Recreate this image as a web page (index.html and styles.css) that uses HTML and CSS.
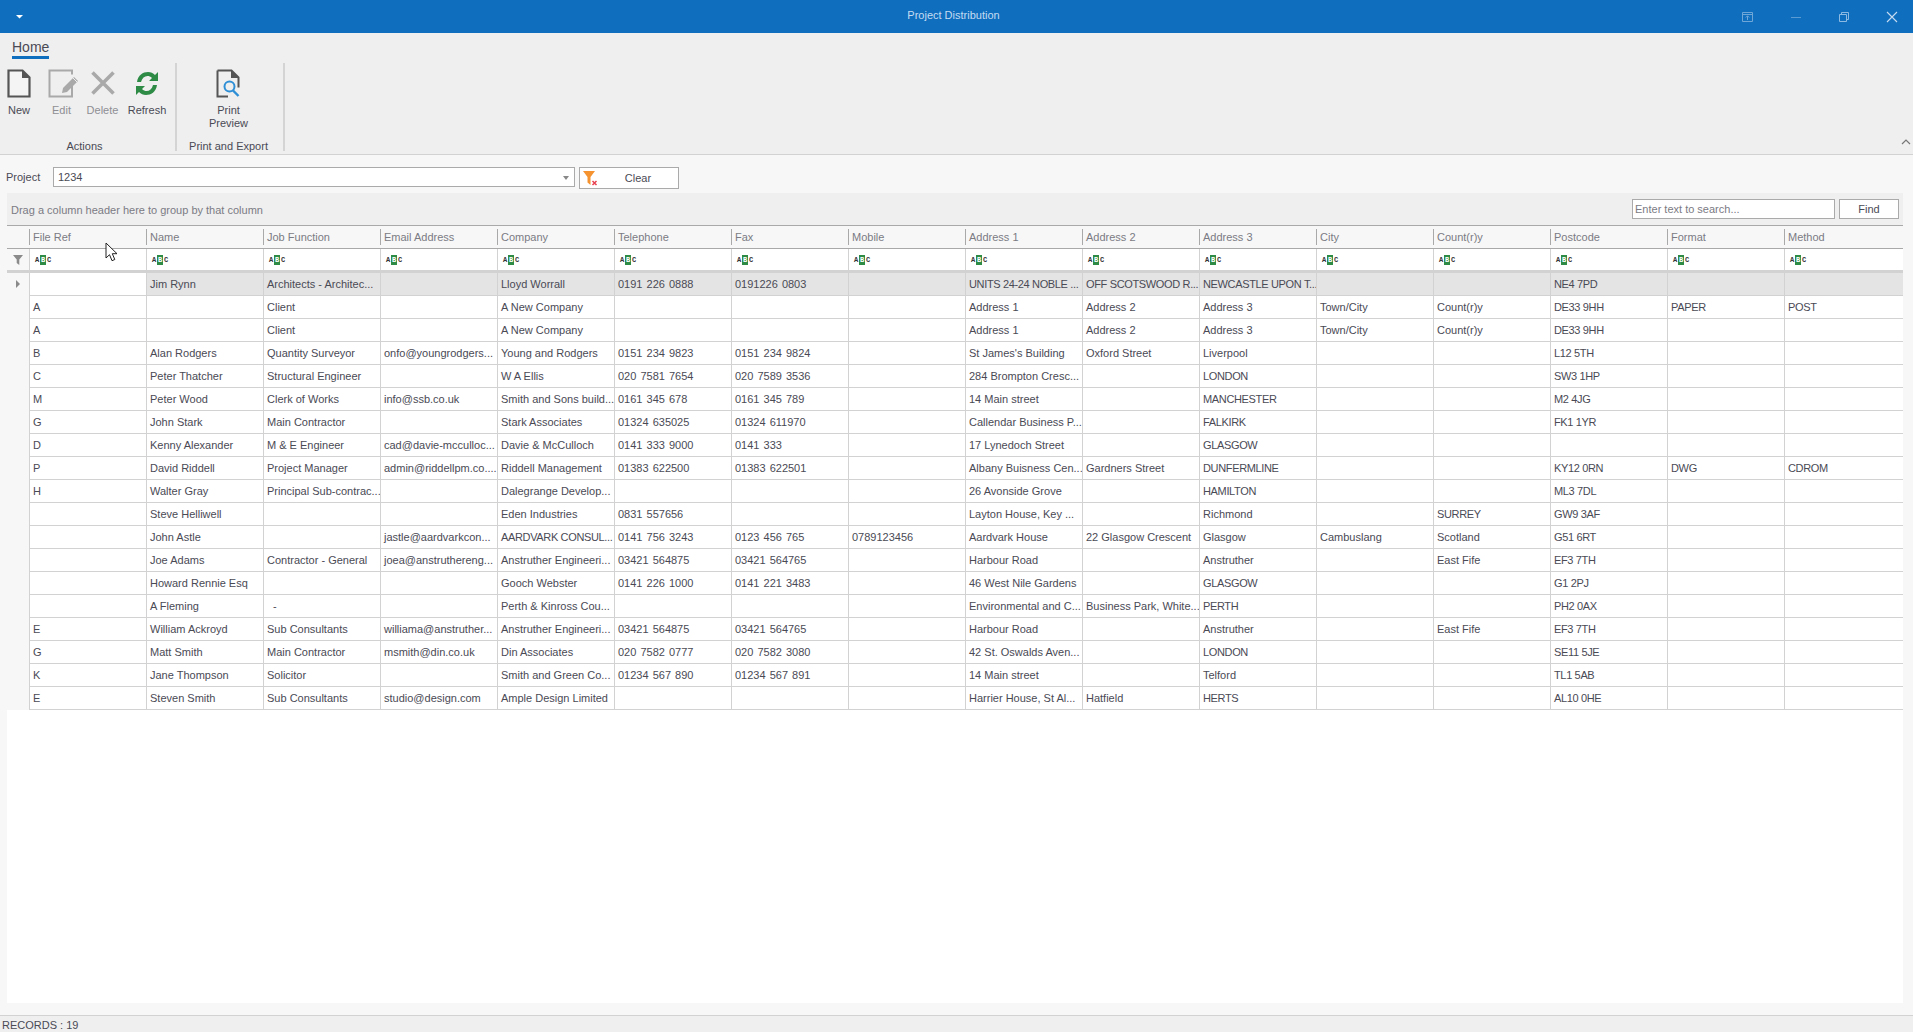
FILE: index.html
```html
<!DOCTYPE html>
<html lang="en">
<head>
<meta charset="utf-8">
<title>Project Distribution</title>
<link rel="stylesheet" href="styles.css">
</head>
<body>
<div class="app">
  <header class="titlebar">
    <svg class="qat" width="7" height="4" viewBox="0 0 7 4"><path d="M0 0h7L3.5 3.5z" fill="#fff"/></svg>
    <div class="title">Project Distribution</div>
    <div class="winbtns">
      <svg width="12" height="12" viewBox="0 0 12 12" fill="none" stroke="#6ea6d8"><path d="M.5 1.5h10v9H.5zM.5 3.5h10M5.5 9V5M3.8 6.5l1.7-1.7 1.7 1.7"/></svg>
      <svg width="12" height="12" viewBox="0 0 12 12" fill="none" stroke="#5b9bd3"><path d="M1 6.5h10"/></svg>
      <svg width="12" height="12" viewBox="0 0 12 12" fill="none" stroke="#8dbae2"><path d="M1.5 3.5h7v7h-7zM3.5 3.5v-2h7v7h-2"/></svg>
      <svg width="12" height="12" viewBox="0 0 12 12" fill="none" stroke="#c6dcf0" stroke-width="1.1"><path d="M1 1l10 10M11 1L1 11"/></svg>
    </div>
  </header>

  <section class="ribbon">
    <div class="tabs"><span class="tab">Home</span></div>
    <div class="groups">
      <div class="group g1">
        <div class="btns">
          <div class="rb w1">
            <svg width="24" height="29" viewBox="0 0 24 29" fill="none"><path d="M1.500 1.500h14l7 7v19h-21z" stroke="#555" stroke-width="2.200" fill="#f4f4f4"/><path d="M15 1v8h8z" fill="#555"/></svg>
            <span>New</span>
          </div>
          <div class="rb w2 off">
            <svg class="editicon" width="31" height="29" viewBox="0 0 31 29" fill="none"><path d="M24 13v14.500H1.500v-26H24v4" stroke="#a9a9a9" stroke-width="2"/><path d="M15 19l11-11 4 4-11 11-5 1z" fill="#a9a9a9"/><path d="M25 9l4 4" stroke="#f0f0f0"/></svg>
            <span>Edit</span>
          </div>
          <div class="rb w3 off">
            <svg width="26" height="29" viewBox="0 0 26 29" fill="none"><path d="M2.500 3.500l21 21M23.500 3.500l-21 21" stroke="#a9a9a9" stroke-width="3.600"/></svg>
            <span>Delete</span>
          </div>
          <div class="rb w4">
            <svg width="26" height="29" viewBox="0 0 26 29"><path d="M3 13C4 6 9 3 14 3c3 0 5 1 7 3l3-3v9h-9l3-3c-1.500-1.500-3-2-4.500-2-3 0-5.500 2-6.500 6z" fill="#2e8b46"/><path d="M23 16c-1 7-6 10-11 10-3 0-5-1-7-3l-3 3v-9h9l-3 3c1.500 1.500 3 2 4.500 2 3 0 5.500-2 6.500-6z" fill="#2e8b46"/></svg>
            <span>Refresh</span>
          </div>
        </div>
        <div class="glabel g1label">Actions</div>
      </div>
      <div class="group g2">
        <div class="btns">
          <div class="rb w5">
            <svg width="25" height="29" viewBox="0 0 25 29" fill="none"><path d="M1.500 1.500h14l7 7v10M12 27.500H1.500v-26" stroke="#555" stroke-width="2"/><path d="M15 1v8h8z" fill="#555"/><circle cx="13.500" cy="17.500" r="5" stroke="#2f8fd6" stroke-width="2"/><path d="M17 21.500l5.500 5.500" stroke="#2f8fd6" stroke-width="2.400"/></svg>
            <span>Print<br>Preview</span>
          </div>
        </div>
        <div class="glabel">Print and Export</div>
      </div>
    </div>
    <svg class="collapse" width="10" height="6" viewBox="0 0 10 6" fill="none"><path d="M1 5l4-4 4 4" stroke="#777" stroke-width="1.200"/></svg>
  </section>

  <main class="content">
    <div class="filterbar">
      <label class="plabel">Project</label>
      <div class="combo"><span>1234</span><i class="caret"></i></div>
      <button class="clear">
        <svg width="15" height="15" viewBox="0 0 15 15"><path d="M0 0h12L7.500 6v8l-3-2.500V6z" fill="#f59331"/><path d="M9.500 10l4 4M13.500 10l-4 4" stroke="#e8404f" stroke-width="1.500"/></svg>
        <span>Clear</span>
      </button>
    </div>
    <div class="gridwrap">
      <div class="grouppanel">
        <span class="gptext">Drag a column header here to group by that column</span>
        <div class="search">
          <div class="sinput">Enter text to search...</div>
          <button class="find">Find</button>
        </div>
      </div>
      <div class="grid" id="grid"></div>
    </div>
  </main>

  <footer class="status">RECORDS : 19</footer>

  <svg class="cursor" width="14" height="21" viewBox="0 0 14 21"><path d="M1 1v15l3.500-3.300 2.500 6 2.800-1.200-2.500-5.800H12z" fill="#fff" stroke="#222" stroke-width="1"/></svg>
</div>
<script src="app.js"></script>
</body>
</html>
```

FILE: styles.css
```css
* { box-sizing: border-box; }
html, body { margin: 0; padding: 0; height: 100%; overflow: hidden; }
body { font-family: "Liberation Sans", Arial, sans-serif; font-size: 11px; color: #4a4a55; background: #f7f7f7; }
button { font: inherit; color: inherit; }
.app { position: relative; width: 1913px; height: 1032px; display: flex; flex-direction: column; }

.titlebar { height: 33px; background: #106ebe; display: flex; align-items: center; position: relative; flex: none; }
.qat { margin-left: 16px; margin-top: 1px; }
.title { position: absolute; left: 0; right: 6px; top: 8px; text-align: center; color: #c4dcf2; line-height: 14px; }
.winbtns { margin-left: auto; display: flex; gap: 36px; padding-right: 15px; }

.ribbon { height: 122px; background: #efefef; border-bottom: 1px solid #d2d2d2; flex: none; position: relative; }
.tabs { height: 30px; padding: 6px 0 0 12px; }
.tab { display: inline-block; height: 20px; line-height: 16px; font-size: 14px; color: #4a4a55; border-bottom: 3px solid #106ebe; }
.groups { display: flex; height: 88px; }
.group { display: flex; flex-direction: column; border-right: 2px solid #d4d4d4; }
.g1 { width: 177px; }
.g2 { width: 108px; padding-right: 3px; }
.btns { display: flex; height: 67px; flex: none; }
.rb { display: flex; flex-direction: column; align-items: center; text-align: center; line-height: 13px; padding-top: 6px; }
.rb svg { display: block; margin-bottom: 6px; height: 29px; }
.rb .editicon { margin-left: 3px; }
.rb.off { color: #8e8e94; }
.w1 { width: 38px; }
.w2 { width: 47px; }
.w3 { width: 35px; }
.w4 { width: 54px; }
.w5 { width: 100%; }
.glabel { text-align: center; line-height: 14px; padding-top: 9px; white-space: nowrap; }
.g1label { padding-right: 6px; }
.collapse { position: absolute; right: 2px; bottom: 9px; }

.content { flex: 1; display: flex; flex-direction: column; min-height: 0; }
.filterbar { height: 38px; display: flex; align-items: flex-start; padding: 12px 0 0 6px; flex: none; }
.plabel { width: 47px; line-height: 20px; }
.combo { width: 522px; height: 20px; border: 1px solid #aaa; background: #fff; line-height: 18px; padding-left: 4px; position: relative; }
.caret { position: absolute; right: 5px; top: 8px; border: 3px solid transparent; border-top: 4px solid #888; border-bottom: 0; }
.clear { margin-left: 4px; width: 100px; height: 22px; border: 1px solid #aaa; background: #fff; display: flex; align-items: center; padding: 0 0 0 3px; }
.clear span { flex: 1; text-align: center; margin: 0 8px; line-height: 18px; }

.gridwrap { margin: 0 10px 12px 7px; flex: 1; background: #fff; display: flex; flex-direction: column; min-height: 0; }
.grouppanel { height: 33px; background: #efefef; display: flex; align-items: center; padding: 0 4px; flex: none; border-bottom: 1px solid #a9a9a9; }
.gptext { color: #7b7b84; margin-top: 2px; }
.search { margin-left: auto; display: flex; gap: 4px; }
.sinput { width: 203px; height: 20px; border: 1px solid #aaa; background: #fff; color: #7b7b84; line-height: 18px; padding-left: 2px; }
.find { width: 60px; height: 20px; border: 1px solid #aaa; background: #fff; padding: 0; line-height: 16px; }

.grid { display: grid; grid-template-columns: 22px repeat(15, 117px) 119px; grid-template-rows: 23px 24px repeat(19, 23px); }
.hc { background: #f7f7f7; color: #7b7b84; border-bottom: 1px solid #a9a9a9; padding: 0 3px 0 4px; line-height: 23px; position: relative; white-space: nowrap; }
.hc.sep::before { content: ""; position: absolute; left: 0; top: 3px; bottom: 3px; width: 1px; background: #a9a9a9; }
.fc { background: #fff; border-left: 1px solid #d2d2d2; border-bottom: 3px solid #d2d2d2; padding: 6px 0 0 5px; }
.fc.first { border-left: 0; background: #f7f7f7; padding-left: 6px; }
.abc { display: flex; height: 10px; width: 16px; font: 700 7px/10px "Liberation Mono", monospace; color: #333; }
.abc b { width: 7px; background: #2e8b46; color: #fff; text-align: center; margin: 0 1px; }
.abc span { width: 4px; text-align: center; }

.c { border-left: 1px solid #d2d2d2; border-bottom: 1px solid #d2d2d2; padding: 0 2px 0 3px; line-height: 23px; white-space: pre; overflow: hidden; }
.c.hl { background: #e4e4e4; }
.c.caps { letter-spacing: -0.35px; }
.c.num { word-spacing: 1px; }
.c.ind { border: 0; background: #f7f7f7; position: relative; }
.tri { position: absolute; left: 9px; top: 7px; border: 4px solid transparent; border-left-color: #8a8a8a; border-right: 0; }

.status { height: 17px; flex: none; background: #efefef; border-top: 1px solid #d2d2d2; padding: 1px 0 0 2px; line-height: 16px; }
.cursor { position: absolute; left: 105px; top: 242px; }
```

FILE: app.js
```js
var cols = ["File Ref","Name","Job Function","Email Address","Company","Telephone","Fax","Mobile","Address 1","Address 2","Address 3","City","Count(r)y","Postcode","Format","Method"];
var rows = [
["","Jim Rynn","Architects - Architec...","","Lloyd Worrall","0191 226 0888","0191226 0803","","UNITS 24-24 NOBLE ...","OFF SCOTSWOOD R...","NEWCASTLE UPON T...","","","NE4 7PD","",""],
["A","","Client","","A New Company","","","","Address 1","Address 2","Address 3","Town/City","Count(r)y","DE33 9HH","PAPER","POST"],
["A","","Client","","A New Company","","","","Address 1","Address 2","Address 3","Town/City","Count(r)y","DE33 9HH","",""],
["B","Alan Rodgers","Quantity Surveyor","onfo@youngrodgers...","Young and Rodgers","0151 234 9823","0151 234 9824","","St James's Building","Oxford Street","Liverpool","","","L12 5TH","",""],
["C","Peter Thatcher","Structural Engineer","","W A Ellis","020 7581 7654","020 7589 3536","","284 Brompton Cresc...","","LONDON","","","SW3 1HP","",""],
["M","Peter Wood","Clerk of Works","info@ssb.co.uk","Smith and Sons build...","0161 345 678","0161 345 789","","14 Main street","","MANCHESTER","","","M2 4JG","",""],
["G","John Stark","Main Contractor","","Stark Associates","01324 635025","01324 611970","","Callendar Business P...","","FALKIRK","","","FK1 1YR","",""],
["D","Kenny Alexander","M & E Engineer","cad@davie-mcculloc...","Davie & McCulloch","0141 333 9000","0141 333","","17 Lynedoch Street","","GLASGOW","","","","",""],
["P","David Riddell","Project Manager","admin@riddellpm.co....","Riddell Management","01383 622500","01383 622501","","Albany Buisness Cen...","Gardners Street","DUNFERMLINE","","","KY12 0RN","DWG","CDROM"],
["H","Walter Gray","Principal Sub-contrac...","","Dalegrange Develop...","","","","26 Avonside Grove","","HAMILTON","","","ML3 7DL","",""],
["","Steve Helliwell","","","Eden Industries","0831 557656","","","Layton House, Key ...","","Richmond","","SURREY","GW9 3AF","",""],
["","John Astle","","jastle@aardvarkcon...","AARDVARK CONSUL...","0141 756 3243","0123 456 765","0789123456","Aardvark House","22 Glasgow Crescent","Glasgow","Cambuslang","Scotland","G51 6RT","",""],
["","Joe Adams","Contractor - General","joea@anstruthereng...","Anstruther Engineeri...","03421 564875","03421 564765","","Harbour Road","","Anstruther","","East Fife","EF3 7TH","",""],
["","Howard Rennie Esq","","","Gooch Webster","0141 226 1000","0141 221 3483","","46 West Nile Gardens","","GLASGOW","","","G1 2PJ","",""],
["","A Fleming","  -","","Perth & Kinross Cou...","","","","Environmental and C...","Business Park, White...","PERTH","","","PH2 0AX","",""],
["E","William Ackroyd","Sub Consultants","williama@anstruther...","Anstruther Engineeri...","03421 564875","03421 564765","","Harbour Road","","Anstruther","","East Fife","EF3 7TH","",""],
["G","Matt Smith","Main Contractor","msmith@din.co.uk","Din Associates","020 7582 0777","020 7582 3080","","42 St. Oswalds Aven...","","LONDON","","","SE11 5JE","",""],
["K","Jane Thompson","Solicitor","","Smith and Green Co...","01234 567 890","01234 567 891","","14 Main street","","Telford","","","TL1 5AB","",""],
["E","Steven Smith","Sub Consultants","studio@design.com","Ample Design Limited","","","","Harrier House, St Al...","Hatfield","HERTS","","","AL10 0HE","",""]
];
var g = document.getElementById("grid");
function add(cls, text) {
  var d = document.createElement("div");
  d.className = cls;
  if (text !== undefined) { d.textContent = text; }
  g.appendChild(d);
  return d;
}
function kind(t) {
  if (/^[0-9 ]+$/.test(t)) { return " num"; }
  if (/[A-Z]{2}/.test(t) && !/[a-z]/.test(t)) { return " caps"; }
  return "";
}
add("hc");
cols.forEach(function (c) { add("hc sep", c); });
var f = add("fc first");
f.innerHTML = '<svg width="10" height="10" viewBox="0 0 10 10"><path d="M0 0h10L6.300 4.500V10L3.700 8V4.500z" fill="#8a8a8a"/></svg>';
cols.forEach(function () {
  add("fc").innerHTML = '<div class="abc"><span>A</span><b>B</b><span>C</span></div>';
});
rows.forEach(function (r, i) {
  var ind = add("c ind");
  if (i === 0) { ind.innerHTML = '<i class="tri"></i>'; }
  r.forEach(function (t, j) {
    add("c" + (i === 0 && j > 0 ? " hl" : "") + kind(t), t);
  });
});
```
